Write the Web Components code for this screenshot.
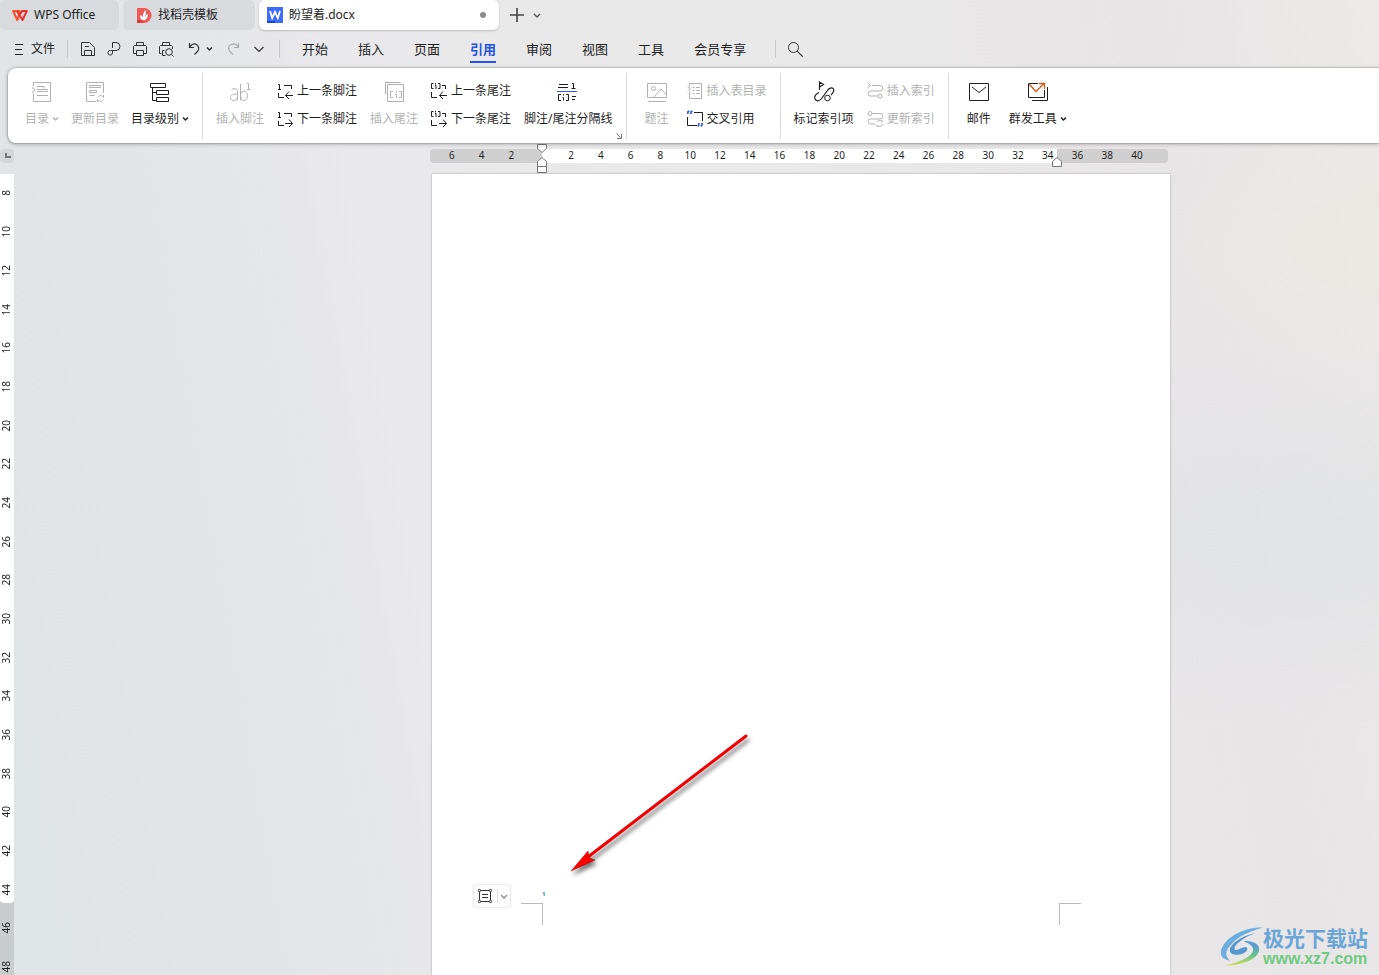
<!DOCTYPE html>
<html lang="zh-CN">
<head>
<meta charset="utf-8">
<title>盼望着.docx - WPS Office</title>
<style>
  html, body { margin: 0; height: 100%; }
  body {
    font-family: "Noto Sans", "Noto Sans CJK SC", sans-serif;
    font-size: 12px; line-height: 20px; color: #1f1f1f; overflow: hidden;
  }
</style>
</head>
<body>
<wps-app></wps-app>
<script>
const define = (name, html) => {
  const tpl = document.createElement('template');
  customElements.define(name, class extends HTMLElement {
    connectedCallback() {
      if (this.shadowRoot) return;
      tpl.innerHTML = typeof html === 'function' ? html(this) : html;
      this.attachShadow({ mode: 'open' }).append(tpl.content.cloneNode(true));
    }
  });
};

const RESET = `*{box-sizing:border-box}
button{font:inherit;color:inherit;background:none;border:0;padding:0;margin:0;text-align:left;white-space:nowrap}`;

/* name: [width, height, svg content] */
const ICONS = {
  wps: [16, 16, `<g stroke-width="2" stroke-linejoin="round"><path stroke="#f8502f" d="M8.500 6.500L7.500 4H1.200l4 9L8 6.500"/><path stroke="#e8302a" d="M5 4l5.500 9 4.300-9H10l-1.500 3"/></g>`],
  docer: [16, 16, `<path fill="#ee5a57" stroke="none" d="M1 1h7a7 7 0 0 1 0 15H1z"/><path fill="#d33c3c" stroke="none" d="M1 13h4l3 3H1z"/><path fill="#fff" stroke="none" d="M7.500 13C5 13 4 11 4 8c2 .5 2.700 2 3 3C6.500 8 7.500 5 9.500 3c.8 2 .6 4-.8 7 .8-1.500 1.800-2.500 3.300-3-.2 3.500-1.500 6-4.500 6z"/>`],
  writer: [16, 16, `<path fill="#3f6bfb" stroke="none" d="M0 0h16v16H0z"/><path fill="#1b46d6" stroke="none" d="M0 14h8v2H0z"/><path stroke="#fff" stroke-width="1.800" d="M3 4l2.200 7L8 5l2.800 6L13 4"/>`],
  plus: [14, 14, `<path stroke-width="1.600" d="M7 0v14M0 7h14"/>`],
  chev: [8, 8, `<path stroke-width="1.300" d="M1 3l3 3 3-3"/>`],
  chevL: [16, 16, `<path stroke-width="1.200" d="M3.500 6L8 10.500 12.500 6"/>`],
  caret: [7, 6, `<path stroke-width="1.500" d="M1 1.500l2.500 2.500L6 1.500"/>`],
  menu: [16, 16, `<path d="M4 3.500h8M4 8.500h7M4 13.500h8"/>`],
  save: [16, 16, `<path d="M1.500 14.500v-13h8l5 5v8zM4.500 14.500v-5h7v5M5 5.500h4"/>`],
  pdf: [16, 16, `<path d="M6.500 7V1.500H10a3.500 3.500 0 0 1 0 8H4.500a2.300 2.300 0 1 0 2 2.500V9.500"/>`],
  print: [16, 16, `<path d="M4.500 4.500v-3h7v3M4.500 12.500h-3v-7l1-1h11l1 1v7h-3M4.500 9.500h7v5h-7z"/>`],
  preview: [16, 16, `<path d="M4.500 4.500v-3h7v3M3.500 12.500h-2v-7l1-1h11l1 1V8M4.500 14.500v-5h2M4.500 14.500h3M13.500 13.500l2 2"/><circle cx="11" cy="11" r="3.300"/>`],
  undo: [16, 16, `<path stroke-width="1.200" d="M5.500 2v4.500H10M5.500 6.500C7 3.500 10 2 12.500 3.500s3 5 1 7L10.500 13.500"/>`],
  redo: [16, 16, `<path stroke-width="1.200" d="M13.500 2v4.500H9M13.500 6.500C12 3.500 9 2 6 3.500s-3 5-1 7L8 13.500"/>`],
  search: [16, 16, `<circle cx="6.500" cy="6.500" r="5"/><path stroke-width="1.200" d="M10.200 10.200l5.500 5.500"/>`],
  toc: [24, 24, `<path d="M3.500 6.500v-4h17v19h-17v-8M2 7.500l3 2.500-3 2.500M7 6.500h7v2M7 9.500h11M7 11.500h11M7 15.500h11"/>`],
  tocUpdate: [24, 24, `<path d="M13 21.500H3.500v-19h17V13M6.500 5.500h11v2h-11zM6.500 10.500h7v2h-7zM6.500 15.500h5M14.500 17.500c1-2.500 5-2.500 6 0v-2.500M20.500 19.500c-1 2.500-5 2.500-6 0V22"/>`],
  level: [24, 24, `<path d="M2.500 3.500h15v4h-15zM4.500 7.500v13h4M4.500 12.500h4M8.500 10.500h12v4h-12zM8.500 17.500h12v4h-12z"/>`],
  footnote: [24, 24, `<path d="M3.500 10c1.500-2 6-2 6 1.500v9M9.500 14C6 14 2.500 14.500 2.500 17.500c0 4 6 4 7-.5M12.500 4v16.500"/><ellipse cx="16" cy="15.800" rx="3.500" ry="4.800"/><path d="M19 3.500h1.500v6M18.500 9.500h4"/>`],
  endnote: [24, 24, `<path d="M3.500 14V2.500h15M5.500 4.500h16v17h-16zM11 11.500H8.500v6H11M17 11.500h2.500v6H17M14.500 11v1.500M13 14.500h1.500V18"/>`],
  fnPrev: [16, 16, `<path d="M1 1.500h1.500v5M1 6.500h3M7 2.500h7.500V6M1.500 10v4.500H7M16 12.500H8.500M12 8.500l-3.500 4 3.500 3.500"/>`],
  fnNext: [16, 16, `<path d="M1 1.500h1.500v5M1 6.500h3M7 2.500h7.500V6M1.500 10v4.500H7M8 12.500h7.500M12 8.500l3.500 4-3.500 3.500"/>`],
  enPrev: [16, 16, `<path d="M2.500.5h-2v5h2M7 .5h2v5H7M4.500 0v1.500M4 2.500h1V6M11 2.500h3.500V6M.5 9v5.500H6M16 12.500H8.500M12 8.500l-3.500 4 3.500 3.500"/>`],
  enNext: [16, 16, `<path d="M2.500.5h-2v5h2M7 .5h2v5H7M4.500 0v1.500M4 2.500h1V6M11 2.500h3.500V6M.5 9v5.500H6M8 12.500h7.500M12 8.500l3.500 4-3.500 3.500"/>`],
  divider: [24, 24, `<path d="M3 4.500h9M2 7.500h10M16 3.500h1.500v5M15.500 8.500h4M5 14.500H2.500v6H5M10 14.500h2.500v6H10M7.500 14v1.500M6.500 17.500h1v3M16 16.500h4M16 19.500h3"/><path stroke="#2f5fe0" d="M1 11.500h20"/>`],
  caption: [24, 24, `<path d="M2.500 3.500h19v14h-19zM3 21.500h18M9 17l7-8 5.500 6"/><circle cx="8.500" cy="8.500" r="2"/>`],
  tableList: [16, 16, `<path d="M2.500 3.500v-3h12v15h-12v-7M.5 3.500l3 2-3 2.500M5.500 4.500h2M9 4.500h4M5.500 7.500h2M9 7.500h4M5.500 10.500h2M9 10.500h4"/>`],
  crossRef: [16, 16, `<path d="M7 1.500h8.500V10M.5 6v8.500H10"/><path stroke="#3765e6" stroke-width="1.800" d="M.8 3V1l1.500-1M4 3V1l1.500-1M11.800 12v2l-1 1.500M15 12v2l-1 1.500"/>`],
  markIndex: [24, 24, `<path stroke-width="1.200" d="M7.500 10V2l4 2.500-4 2.500M7 12.500c-3 1.500-5 4-4 6.500 1.500 3 5 2 7-1l5-7c2-3 5-4 6.500-2 1 2-.5 4-2.500 6"/><circle cx="15.500" cy="18" r="2.800"/>`],
  insIndex: [16, 16, `<path d="M.5 0l3 2.500-3 2.500M5 2.500h8a2.500 2.500 0 0 1 0 5.500H3.500a2.500 2.500 0 0 0 0 5H11"/><circle cx="13" cy="13" r="2"/>`],
  updIndex: [16, 16, `<circle cx="3" cy="2.500" r="2"/><path d="M5 2.500h8a2.500 2.500 0 0 1 0 5.500H3.500a2.500 2.500 0 0 0 0 5H8M10 11c1-2 4-2 5 0V9M15.500 13c-1 3-4 3-5.500 1v2"/>`],
  mail: [24, 24, `<path d="M2.500 3.500h19v17h-19zM5 7l7 5.500L19 7"/>`],
  bulk: [24, 24, `<path d="M12 3.500H2.500v14h16V10M21.500 7v13.500H6"/><path stroke="#d0591c" stroke-width="1.300" d="M3 4l7 7.500L18 3.500M13 3.500h5.500V9"/>`],
  launcher: [8, 8, `<path d="M1.500 1.500l4 4M6.500 2v4.500H2"/>`],
  frame: [16, 16, `<path d="M3 2.500h10M3 13.500h10M2.500 3v10M13.500 3v10M5 6.500h6M5 9.500h6"/><g fill="#fff"><circle cx="2.500" cy="2.500" r="1.200"/><circle cx="13.500" cy="2.500" r="1.200"/><circle cx="2.500" cy="13.500" r="1.200"/><circle cx="13.500" cy="13.500" r="1.200"/></g>`]
};

define('wps-icon', el => {
  const [w, h, body] = ICONS[el.getAttribute('name')];
  return `<style>:host{display:block;flex:none}svg{display:block;overflow:visible}</style>
  <svg width="${w}" height="${h}" viewBox="0 0 ${w} ${h}" fill="none" stroke="currentColor" aria-hidden="true">${body}</svg>`;
});

/* ---- title bar ---- */
define('doc-tab', el => `<style>${RESET}
  :host{display:block;width:var(--w);height:30px}
  button{display:flex;align-items:center;gap:6px;width:100%;height:30px;padding:0 13px;border-radius:6px;background:#d8dade}
  :host([active]) button{background:#fff;box-shadow:0 1px 2px #0003;padding-left:8px}
  .dot{margin-left:auto;width:6px;height:6px;border-radius:3px;background:#8b8b8b}
  </style>
  <button role="tab"><wps-icon name="${el.getAttribute('icon')}"></wps-icon><span><slot></slot></span>${el.hasAttribute('active') ? '<i class="dot"></i>' : ''}</button>`);

define('title-bar', `<style>${RESET}
  :host{display:flex;align-items:center;height:30px;gap:4px}
  .first{margin-left:-1px}
  .add{margin-left:7px;color:#444}.more{margin-left:5px;color:#555}
  </style>
  <doc-tab class="first" icon="wps" style="--w:120px">WPS Office</doc-tab>
  <doc-tab icon="docer" style="--w:132px">找稻壳模板</doc-tab>
  <doc-tab icon="writer" active style="--w:240px">盼望着.docx</doc-tab>
  <button class="add" aria-label="新建"><wps-icon name="plus"></wps-icon></button>
  <button class="more" aria-label="标签列表"><wps-icon name="chev"></wps-icon></button>`);

/* ---- menu bar ---- */
define('menu-bar', `<style>${RESET}
  :host{display:flex;align-items:center;height:38px;color:#333}
  .file{display:flex;align-items:center;gap:4px;margin-left:11px;color:#222}
  .sep{width:1px;height:18px;background:#c4c7cb}
  .file+.sep{margin-left:12px}
  .quick{display:flex;align-items:center;gap:10px;margin:0 12px}
  .undo{display:flex;align-items:center;gap:6px}
  .off{color:#a9acb0;margin-left:2px}
  nav{display:flex;gap:30px;margin:0 29px 0 22px;font-size:13px;color:#222}
  nav button{height:28px;border:solid transparent;border-width:2px 0}
  nav .on{color:#2455e0;font-weight:700;border-bottom-color:#2455e0}
  .find{margin-left:11px}
  </style>
  <button class="file"><wps-icon name="menu"></wps-icon>文件</button>
  <span class="sep"></span>
  <div class="quick">
    <button aria-label="保存"><wps-icon name="save"></wps-icon></button>
    <button aria-label="输出为PDF"><wps-icon name="pdf"></wps-icon></button>
    <button aria-label="打印"><wps-icon name="print"></wps-icon></button>
    <button aria-label="打印预览"><wps-icon name="preview"></wps-icon></button>
    <button class="undo" aria-label="撤销"><wps-icon name="undo"></wps-icon><wps-icon name="caret"></wps-icon></button>
    <button class="off" aria-label="恢复"><wps-icon name="redo"></wps-icon></button>
    <button aria-label="更多"><wps-icon name="chevL"></wps-icon></button>
  </div>
  <span class="sep"></span>
  <nav><button>开始</button><button>插入</button><button>页面</button><button class="on">引用</button><button>审阅</button><button>视图</button><button>工具</button><button>会员专享</button></nav>
  <span class="sep"></span>
  <button class="find" aria-label="搜索"><wps-icon name="search"></wps-icon></button>`);

/* ---- ribbon ---- */
define('ribbon-button', el => `<style>${RESET}
  :host{display:block}
  button{display:flex;align-items:center;gap:4px;height:20px}
  :host([large]) button{flex-direction:column;gap:5px;height:49px}
  span{display:flex;align-items:center;gap:3px}
  button:disabled{color:#b1b1b1}
  </style>
  <button ${el.hasAttribute('off') ? 'disabled' : ''}><wps-icon name="${el.getAttribute('icon')}"></wps-icon><span><slot></slot>${el.hasAttribute('caret') ? '<wps-icon name="caret"></wps-icon>' : ''}</span></button>`);

define('ribbon-stack', `<style>:host{display:flex;flex-direction:column;gap:8px;padding-top:1px}</style><slot></slot>`);

define('ribbon-group', `<style>
  :host{display:flex;gap:var(--gap,12px);position:relative;padding:7px 13px 0;height:66px;box-sizing:border-box;border-right:1px solid #d9d9d9}
  :host([last]){border:0}
  </style><slot></slot>`);

define('ribbon-bar', `<style>${RESET}
  :host{display:flex;height:75px;margin-left:8px;padding:5px 0 0 4px;background:#fff;border-radius:8px 0 0 8px;box-shadow:0 0 1px 1px #0002,0 1px 4px #0004;position:relative;z-index:2;box-sizing:border-box}
  .launch{position:absolute;right:3px;bottom:-1px;color:#777}
  .mid{--gap:13px}
  .wide{--gap:18px;padding-left:18px}
  </style>
  <ribbon-group>
    <ribbon-button large off caret icon="toc">目录</ribbon-button>
    <ribbon-button large off icon="tocUpdate">更新目录</ribbon-button>
    <ribbon-button large caret icon="level">目录级别</ribbon-button>
  </ribbon-group>
  <ribbon-group class="mid">
    <ribbon-button large off icon="footnote">插入脚注</ribbon-button>
    <ribbon-stack><ribbon-button icon="fnPrev">上一条脚注</ribbon-button><ribbon-button icon="fnNext">下一条脚注</ribbon-button></ribbon-stack>
    <ribbon-button large off icon="endnote">插入尾注</ribbon-button>
    <ribbon-stack><ribbon-button icon="enPrev">上一条尾注</ribbon-button><ribbon-button icon="enNext">下一条尾注</ribbon-button></ribbon-stack>
    <ribbon-button large icon="divider">脚注/尾注分隔线</ribbon-button>
    <button class="launch" aria-label="脚注和尾注设置"><wps-icon name="launcher"></wps-icon></button>
  </ribbon-group>
  <ribbon-group class="wide">
    <ribbon-button large off icon="caption">题注</ribbon-button>
    <ribbon-stack><ribbon-button off icon="tableList">插入表目录</ribbon-button><ribbon-button icon="crossRef">交叉引用</ribbon-button></ribbon-stack>
  </ribbon-group>
  <ribbon-group class="mid">
    <ribbon-button large icon="markIndex">标记索引项</ribbon-button>
    <ribbon-stack><ribbon-button off icon="insIndex">插入索引</ribbon-button><ribbon-button off icon="updIndex">更新索引</ribbon-button></ribbon-stack>
  </ribbon-group>
  <ribbon-group class="wide" last>
    <ribbon-button large icon="mail">邮件</ribbon-button>
    <ribbon-button large caret icon="bulk">群发工具</ribbon-button>
  </ribbon-group>`);

/* ---- rulers ---- */
const hMarks = [6, 4, 2, ''].concat(Array.from({ length: 20 }, (_, i) => 2 * i + 2));
define('ruler-h', `<style>${RESET}
  :host{display:grid;grid-template-columns:14px 2fr 738px 1fr;padding:6px 3px 0 0;height:31px;box-sizing:border-box}
  .corner{width:14px;height:14px;border-radius:4px;background:#d5d6d7;padding:4px 3px 0 5px}
  .corner i{display:block;width:6px;height:5px;border:solid #777;border-width:0 0 2px 2px}
  .bar{grid-column:3;position:relative;height:14px;border-radius:4px;background:linear-gradient(90deg,#cfcfcf 112px,#fff 112px 627px,#cfcfcf 627px)}
  .marks{display:grid;grid-template-columns:repeat(24,1fr);padding:0 16px 0 7px;font-size:10px;line-height:13px;text-align:center}
  svg{position:absolute;top:-6px;overflow:visible;fill:#fff;stroke:#777}
  .in{left:107px}.end{left:622px}
  </style>
  <div class="corner"><i></i></div>
  <div class="bar"><div class="marks">${hMarks.map(n => `<span>${n}</span>`).join('')}</div>
    <svg class="in" width="10" height="31"><path d="M.5 1.500h9v4l-4.500 4-4.500-4zM.5 23.500v-5l4.500-4 4.500 4v5zM.5 23.500h9v6h-9z"/></svg>
    <svg class="end" width="10" height="31"><path d="M.5 23.500v-5l4.500-4 4.500 4v5z"/></svg>
  </div>`);

define('ruler-v', `<style>
  :host{display:block;position:relative;width:14px;overflow:hidden;background:#cacdce}
  .area{height:729px;background:#fff;border-radius:0 0 4px 4px}
  .marks{position:absolute;top:0;left:0;width:13px;height:812px;display:grid;grid-template-rows:repeat(21,1fr);justify-items:center;align-items:center;font-size:10px;line-height:13px}
  span{writing-mode:vertical-rl;transform:rotate(180deg)}
  </style><div class="area"></div>
  <div class="marks">${Array.from({ length: 21 }, (_, i) => `<span>${2 * i + 8}</span>`).join('')}</div>`);

/* ---- page ---- */
define('doc-page', `<style>${RESET}
  :host{display:block;position:relative;background:#fff;box-shadow:0 0 2px #0005;padding:710px 89px 0 41px;overflow:hidden}
  .foot{display:flex;align-items:flex-start;height:41px}
  .tool{display:flex;align-items:center;gap:4px;width:38px;height:24px;padding:0 3px;border:1px solid #e8e8e8;border-radius:4px;color:#333}
  .tool wps-icon+wps-icon{border-left:1px solid #ddd;padding:3px 0 3px 2px;color:#888}
  .c{width:22px;height:22px;margin-top:19px;border:0 solid #bbb;border-top-width:1px}
  .l{margin-left:10px;border-right-width:1px}
  .r{margin-left:auto;border-left-width:1px}
  sup{font-size:6px;font-weight:700;line-height:8px;color:#2f86d8;margin:6px 0 0 -1px}
  .arrow{position:absolute;left:132px;top:554px;overflow:visible;filter:drop-shadow(2px 4px 2px #0008)}
  </style>
  <div class="foot">
    <button class="tool" aria-label="版式"><wps-icon name="frame"></wps-icon><wps-icon name="chev"></wps-icon></button>
    <i class="c l"></i><sup>1</sup><i class="c r"></i>
  </div>
  <svg class="arrow" width="190" height="150"><path d="M182 8L20 132" stroke="#f00000" stroke-width="3" stroke-linecap="round"/><path fill="#f00" stroke="#900" stroke-width=".5" d="M7 143L24 123 25 130 31 132Z"/></svg>`);

define('site-mark', `<style>
  :host{position:absolute;right:11px;bottom:6px;display:flex}
  svg{display:block;margin-top:2px}
  div{display:flex;flex-direction:column;white-space:nowrap}
  span{color:#6aa5d6;font:700 21px/24px "Noto Sans CJK SC",sans-serif}
  a{color:#6dcb81;text-decoration:none;font:700 16px/20px "Liberation Sans",sans-serif}
  </style>
  <svg width="43" height="40" viewBox="0 0 44 40"><defs><linearGradient id="g" x1="0" y1="0" x2="0" y2="1"><stop offset=".2" stop-color="#5a9bd0"/><stop offset=".6" stop-color="#69c48b"/><stop offset="1" stop-color="#d8df5a"/></linearGradient></defs>
  <path fill="#6baee0" d="M44 0C26-1 4 10 1 24c-1 7 4 9 9 10-5-5-5-10 1-16C18 9 30 4 44 0z"/>
  <path fill="#5797cf" d="M36 6C24 8 11 16 10 23c0 5 7 6 13 4 5-2 7-6 3-7-4 0-6 3-10 3-3-1 0-6 6-10 4-3 9-5 14-7z"/>
  <path fill="url(#g)" d="M24 14c9-1 17 3 16 9-1 9-16 16-36 16 15-3 29-9 30-16 0-4-4-7-10-9z"/></svg>
  <div><span>极光下载站</span><a href="#">www.xz7.com</a></div>`);

define('wps-app', `<style>
  :host{display:flex;flex-direction:column;height:100vh;position:relative;overflow:hidden;
    background:radial-gradient(ellipse at 100% 25%,#ebe9e2 0,#ebe9e200 12%),radial-gradient(ellipse at 95% 55%,#e1e3e5 0,#e1e3e500 25%),linear-gradient(80deg,#dfe4e7 0,#e2e5e8 18%,#e9e8ea 32%,#e9e9e9 60%,#e8e5e7 85%,#ece9e8 100%)}
  main{flex:1;min-height:0;display:grid;grid-template-columns:14px 2fr 738px 1fr}
  doc-page{grid-column:3}
  </style>
  <title-bar></title-bar><menu-bar></menu-bar><ribbon-bar></ribbon-bar><ruler-h></ruler-h>
  <main><ruler-v></ruler-v><doc-page></doc-page></main>
  <site-mark></site-mark>`);
</script>
</body>
</html>
